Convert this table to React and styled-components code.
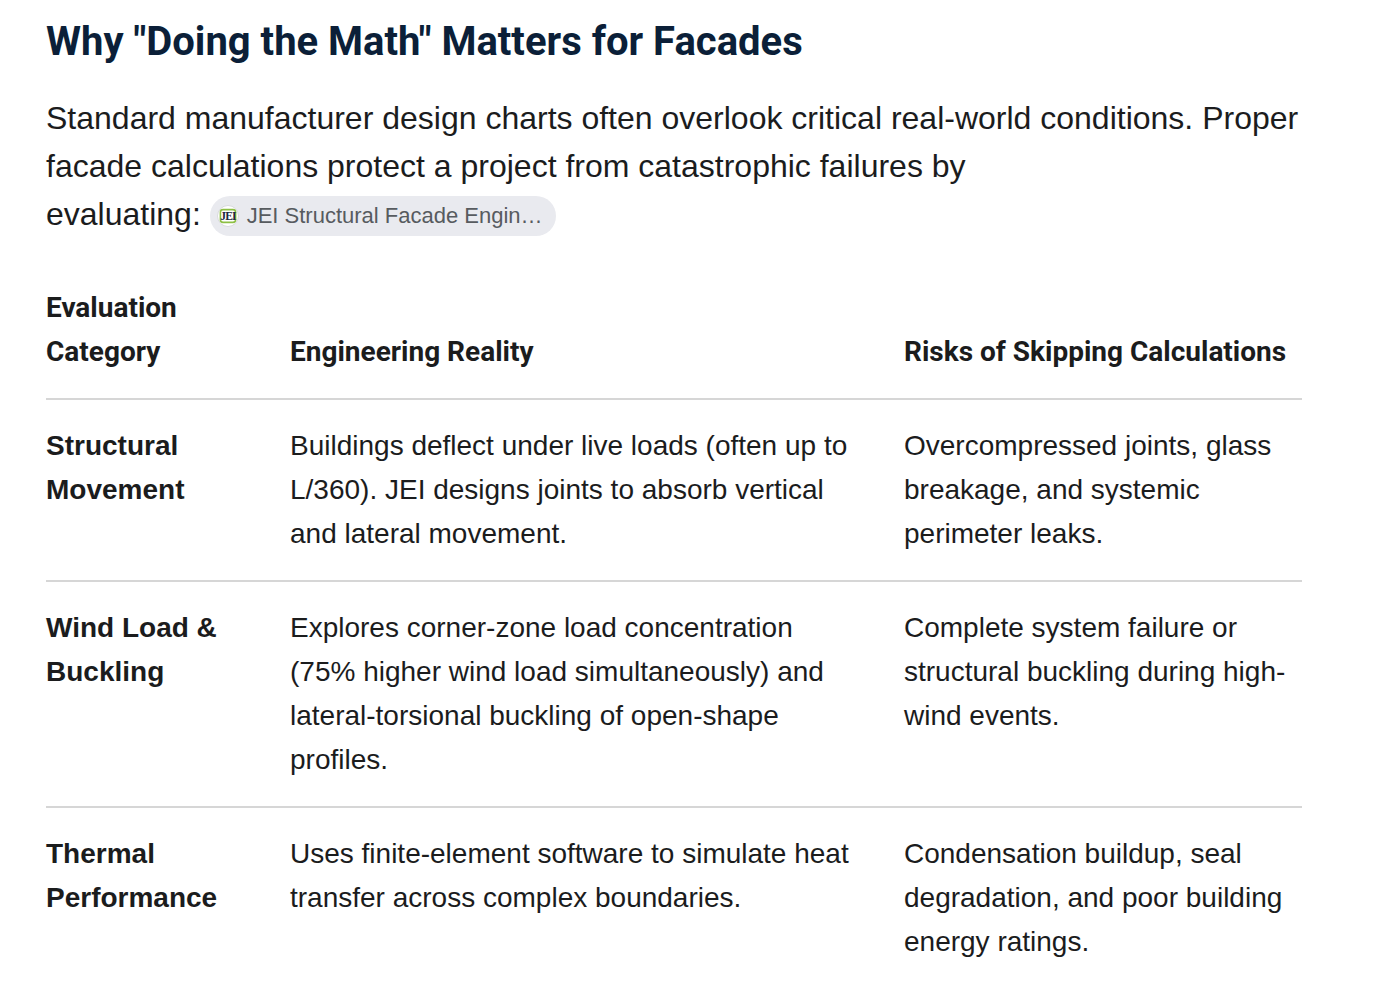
import React from "react";
import styled, { createGlobalStyle } from "styled-components";

const GlobalStyle = createGlobalStyle`
  html, body {
    margin: 0;
    padding: 0;
    background: #ffffff;
  }
  body {
    font-family: "Liberation Sans", Arial, sans-serif;
    color: #1b1c1d;
  }
`;

const rows = [
  {
    category: "Structural Movement",
    reality:
      "Buildings deflect under live loads (often up to L/360). JEI designs joints to absorb vertical and lateral movement.",
    risk: "Overcompressed joints, glass breakage, and systemic perimeter leaks.",
  },
  {
    category: "Wind Load & Buckling",
    reality:
      "Explores corner-zone load concentration (75% higher wind load simultaneously) and lateral-torsional buckling of open-shape profiles.",
    risk: "Complete system failure or structural buckling during high-wind events.",
  },
  {
    category: "Thermal Performance",
    reality:
      "Uses finite-element software to simulate heat transfer across complex boundaries.",
    risk: "Condensation buildup, seal degradation, and poor building energy ratings.",
  },
];

const SourceIcon = () => (
  <svg width="22" height="22" viewBox="0 0 22 22">
    <circle cx="11" cy="11" r="10.5" fill="#ffffff" stroke="#d9dadd" />
    <rect x="3.4" y="4.6" width="15.2" height="12.8" rx="2.6" fill="none" stroke="#8dbf44" strokeWidth="1.6" />
    <text
      x="11"
      y="15.4"
      textAnchor="middle"
      fontFamily="Liberation Serif, serif"
      fontWeight="700"
      fontSize="11.5"
      letterSpacing="-0.8"
      fill="#1b2740"
    >
      JEI
    </text>
  </svg>
);

export default function App() {
  return (
    <>
      <GlobalStyle />
      <Article>
        <Heading>Why "Doing the Math" Matters for Facades</Heading>
        <Lead>
          Standard manufacturer design charts often overlook critical
          real-world conditions. Proper facade calculations protect a project
          from catastrophic failures by{" "}
          <NoWrap>
            evaluating:{" "}
            <SourceChip>
              <SourceIcon />
              <span>JEI Structural Facade Engin…</span>
            </SourceChip>
          </NoWrap>
        </Lead>
        <Table>
          <colgroup>
            <col style={{ width: "244px" }} />
            <col style={{ width: "614px" }} />
            <col />
          </colgroup>
          <thead>
            <tr>
              <HeadCell>Evaluation Category</HeadCell>
              <HeadCell>Engineering Reality</HeadCell>
              <HeadCell>Risks of Skipping Calculations</HeadCell>
            </tr>
          </thead>
          <tbody>
            {rows.map((row, i) => (
              <Row key={row.category} $last={i === rows.length - 1}>
                <Cell $strong>{row.category}</Cell>
                <Cell>{row.reality}</Cell>
                <Cell>{row.risk}</Cell>
              </Row>
            ))}
          </tbody>
        </Table>
      </Article>
    </>
  );
}

const Article = styled.main`
  padding: 14px 0 0 46px;
  width: 1256px;
`;

const Heading = styled.h2`
  margin: 0;
  font-family: Roboto, "Noto Sans", sans-serif;
  font-weight: 700;
  font-size: 40px;
  line-height: 56px;
  color: #0b1f38;
`;

const Lead = styled.p`
  margin: 24px 0 24px;
  font-size: 32px;
  line-height: 48px;
  color: #1b1c1d;
`;

const NoWrap = styled.span`
  white-space: nowrap;
`;

const SourceChip = styled.span`
  display: inline-flex;
  align-items: center;
  gap: 8px;
  height: 40px;
  padding: 0 13px 0 7px;
  border-radius: 20px;
  background: #e9eaef;
  vertical-align: middle;
  position: relative;
  top: -1px;

  span {
    font-size: 22px;
    line-height: 40px;
    color: #575b5f;
  }
`;

const Table = styled.table`
  width: 1256px;
  border-collapse: collapse;
  table-layout: fixed;
`;

const HeadCell = styled.th`
  text-align: left;
  vertical-align: bottom;
  padding: 24px 44px 24px 0;
  font-family: Roboto, "Noto Sans", sans-serif;
  font-weight: 700;
  font-size: 28px;
  line-height: 44px;
  color: #1b1c1d;
  border-bottom: 2px solid #d6d6d6;

  &:last-child {
    padding-right: 0;
  }
`;

const Row = styled.tr`
  border-bottom: ${(p) => (p.$last ? "none" : "2px solid #d6d6d6")};
`;

const Cell = styled.td`
  vertical-align: top;
  padding: 24px 44px 24px 0;
  font-size: 28px;
  line-height: 44px;
  font-weight: ${(p) => (p.$strong ? 700 : 400)};
  color: #1b1c1d;

  &:last-child {
    padding-right: 0;
  }
`;
